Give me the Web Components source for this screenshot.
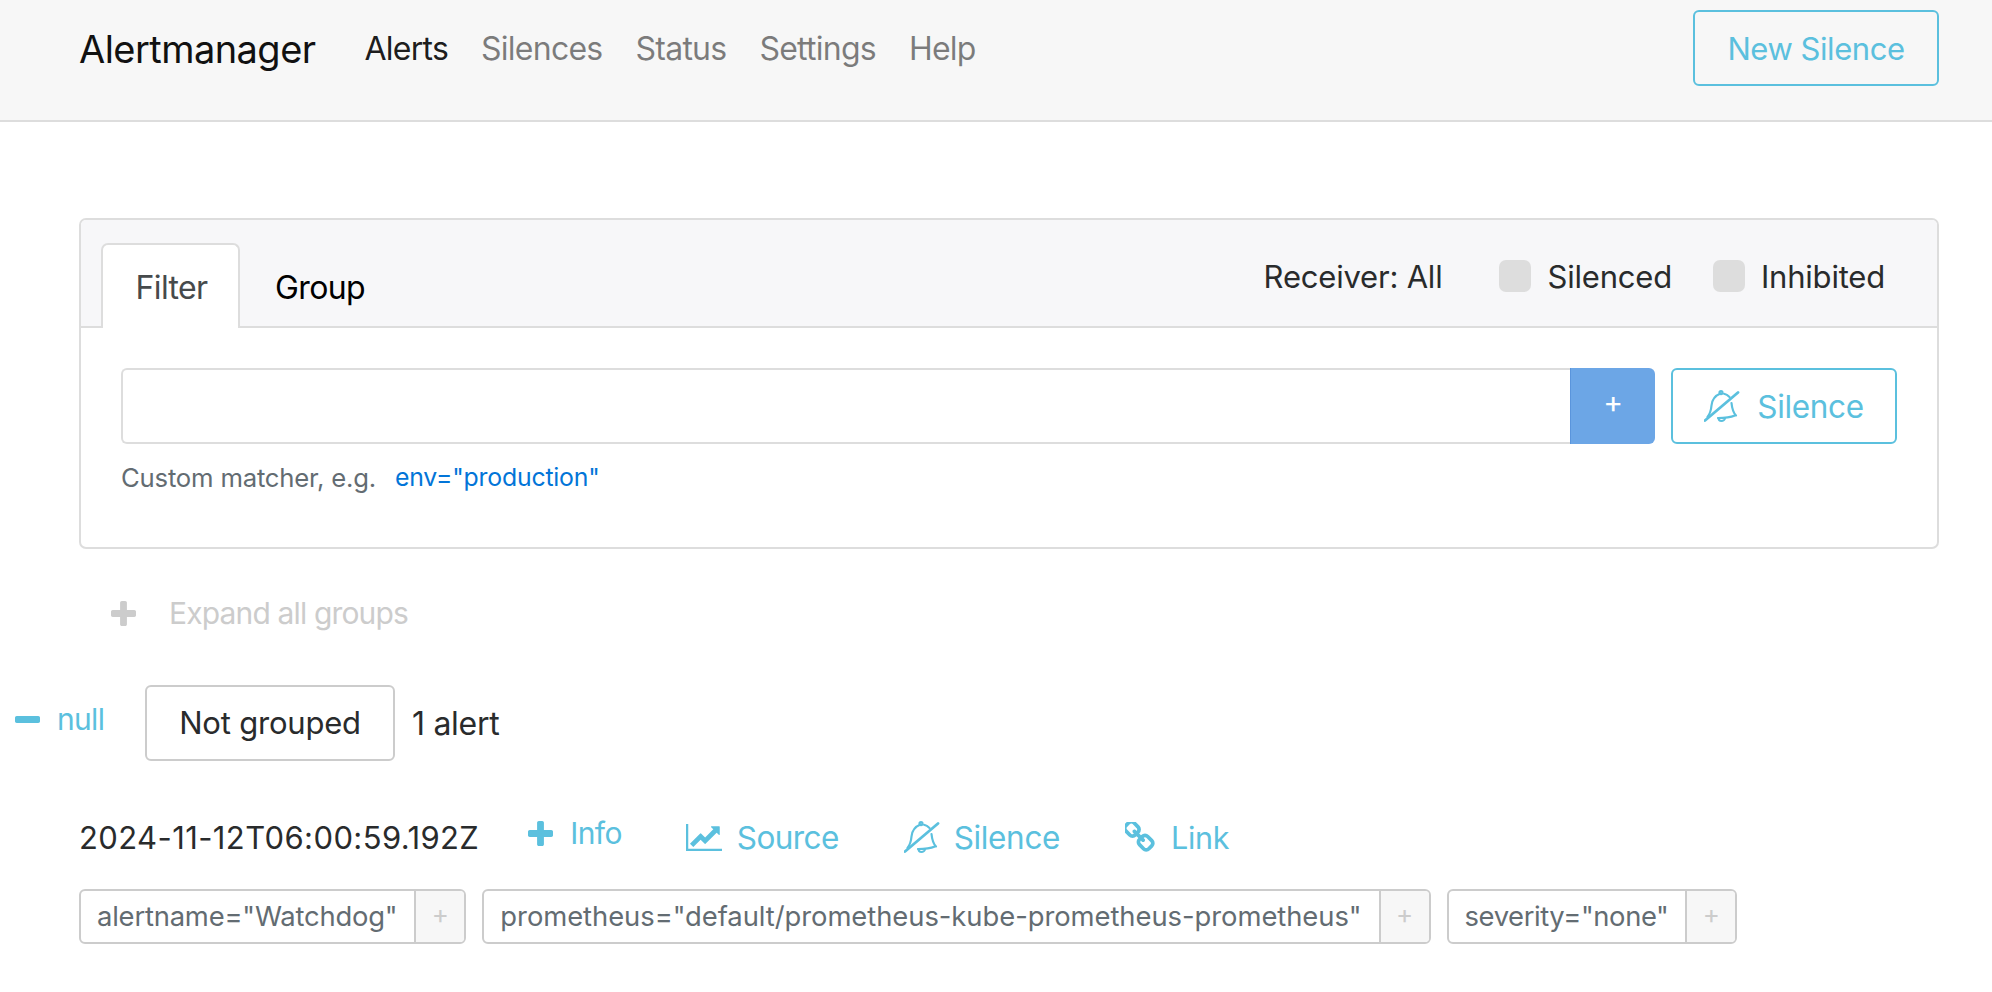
<!DOCTYPE html>
<html>
<head>
<meta charset="utf-8">
<title>Alertmanager</title>
<style>
  html, body { margin: 0; padding: 0; background: #fff; }
  body { font-family: Inter, "Liberation Sans", sans-serif; font-size: 31px; color: #292b2c; }
</style>
</head>
<body>
<am-navbar active="Alerts"></am-navbar>
<am-page>
  <am-filter-card></am-filter-card>
  <am-expand>Expand all groups</am-expand>
  <am-group-row count="1 alert"></am-group-row>
  <am-alert time="2024-11-12T06:00:59.192Z">
    <am-matcher>alertname="Watchdog"</am-matcher>
    <am-matcher style="letter-spacing: -.05px">prometheus="default/prometheus-kube-prometheus-prometheus"</am-matcher>
    <am-matcher style="letter-spacing: -.4px">severity="none"</am-matcher>
  </am-alert>
</am-page>

<script>
  const ICONS = {
    plus: ['192 128 1408 1408', '<path fill="currentColor" d="M1600 736v192q0 40-28 68t-68 28h-416v416q0 40-28 68t-68 28h-192q-40 0-68-28t-28-68v-416h-416q-40 0-68-28t-28-68v-192q0-40 28-68t68-28h416v-416q0-40 28-68t68-28h192q40 0 68 28t28 68v416h416q40 0 68 28t28 68z"/>'],
    minus: ['192 128 1408 1408', '<path fill="currentColor" d="M1600 736v192q0 40-28 68t-68 28h-1216q-40 0-68-28t-28-68v-192q0-40 28-68t68-28h1216q40 0 68 28t28 68z"/>'],
    chart: ['0 128 2048 1536', '<path fill="currentColor" d="M2048 1536v128h-2048v-1536h128v1408h1920zm-128-1248v435q0 21-19.500 29.500t-35.500-7.500l-121-121-633 633q-10 10-23 10t-23-10l-233-233-416 416-192-192 585-585q10-10 23-10t23 10l233 233 464-464-121-121q-16-16-7.500-35.500t29.500-19.500h435q14 0 23 9t9 23z"/>'],
    link: ['128 128 1536 1536', '<path fill="currentColor" d="M1456 1216q0-40-28-68l-208-208q-28-28-68-28-42 0-72 32 3 3 19 18.500t21.500 21.500 15 19 13 25.500 3.500 27.500q0 40-28 68t-68 28q-15 0-27.500-3.500t-25.500-13-19-15-21.500-21.500-18.500-19q-33 31-33 73 0 40 28 68l206 207q27 27 68 27 40 0 68-26l147-146q28-28 28-67zm-703-705q0-40-28-68l-206-207q-28-28-68-28-39 0-68 27l-147 146q-28 28-28 67 0 40 28 68l208 208q27 27 68 27 42 0 72-31-3-3-19-18.500t-21.500-21.500-15-19-13-25.500-3.500-27.500q0-40 28-68t68-28q15 0 27.500 3.500t25.500 13 19 15 21.500 21.500 18.500 19q33-31 33-73zm895 705q0 120-85 203l-147 146q-83 83-203 83-121 0-204-85l-206-207q-83-83-83-203 0-123 88-209l-88-88q-86 88-208 88-120 0-204-84l-208-208q-84-84-84-204t85-203l147-146q83-83 203-83 121 0 204 85l206 207q83 83 83 203 0 123-88 209l88 88q86-88 208-88 120 0 204 84l208 208q84 84 84 204z"/>'],
    bell: ['0 0 36 32', '<g fill="none" stroke="currentColor" stroke-width="2.200" stroke-linecap="round" stroke-linejoin="round"><path d="M1 30.500 34 2.500" stroke-width="2.800"/><path d="M16.500 3.500C10 6 8 10 7.500 15.500 7 21 5.500 24.500 3.500 27M20 3.800c2 .5 4 1.700 5.500 3.200M27.500 13c.5 5 2 10 4.500 12.500H31C26 27.500 20 28 14 28"/><circle cx="17" cy="2.600" r="1.500"/><path d="M14.500 28c0 2 1.500 3 3 3s3.500-1 3.500-3" stroke-width="2"/></g>']
  };

  customElements.define('am-icon', class extends HTMLElement {
    connectedCallback() {
      const [box, body] = ICONS[this.getAttribute('name')];
      const root = this.attachShadow({mode: 'open'});
      root.innerHTML = `<style>
        :host { display: inline-flex; flex: none; }
        svg { display: block; width: var(--w, 25px); height: var(--h, 25px); }
      </style><svg viewBox="${box}" preserveAspectRatio="none">${body}</svg>`;
    }
  });

  customElements.define('am-navbar', class extends HTMLElement {
    constructor() {
      super();
      const active = this.getAttribute('active');
      const links = ['Alerts', 'Silences', 'Status', 'Settings', 'Help'].map(name =>
        `<a class="${name === active ? 'on' : ''}">${name}</a>`).join('');
      this.attachShadow({mode: 'open'}).innerHTML = `<style>
        :host { display: flex; align-items: flex-start; box-sizing: border-box; height: 122px;
          padding: 10px 53px 0 79px; background: #f7f7f7; border-bottom: 2px solid #ddd; }
        .brand { font-size: 38px; line-height: 78px; color: #111; letter-spacing: -.55px; margin-right: 49px; }
        nav { display: flex; gap: 33px; flex: 1; line-height: 78px; font-size: 32px; letter-spacing: -.75px; }
        a { color: rgba(0,0,0,.5); }
        a.on { color: rgba(0,0,0,.9); }
        .new { box-sizing: border-box; width: 246px; height: 76px; border: 2px solid #5bc0de; border-radius: 6px;
          color: #5bc0de; font-size: 31px; letter-spacing: -.45px; line-height: 74px; text-align: center; }
      </style>
      <span class="brand">Alertmanager</span><nav>${links}</nav><span class="new">New Silence</span>`;
    }
  });

  customElements.define('am-page', class extends HTMLElement {
    constructor() {
      super();
      this.attachShadow({mode: 'open'}).innerHTML = `<style>
        :host { display: block; padding: 96px 53px 0 79px; }
      </style><slot></slot>`;
    }
  });

  customElements.define('am-filter-card', class extends HTMLElement {
    constructor() {
      super();
      this.attachShadow({mode: 'open'}).innerHTML = `<style>
        :host { display: block; box-sizing: border-box; height: 331px; border: 2px solid #ddd; border-radius: 7px; font-size: 31px; letter-spacing: -.2px; }
        .head { box-sizing: border-box; height: 108px; display: flex; padding: 23px 52px 0 20px; background: #f7f7f9;
          border-bottom: 2px solid #ddd; border-radius: 5px 5px 0 0; }
        .tab { box-sizing: border-box; height: 85px; line-height: 89px; padding: 0 32px; font-size: 32px; letter-spacing: -.6px; }
        .tab.on { width: 139px; background: #fff; border: 2px solid #ddd; border-bottom: 0; border-radius: 7px 7px 0 0; color: #464a4c; padding: 0 0 0 2px; text-align: center; line-height: 85px; }
        .tab.off { color: #000; padding-left: 35px; }
        .opts { margin-left: auto; display: flex; align-items: center; height: 66px; }
        .recv { margin-right: 57px; }
        .chk { width: 32px; height: 32px; border-radius: 7px; background: #ddd; margin-right: 16px; }
        .lbl { margin-right: 41px; }
        .lbl:last-child { margin-right: 0; }
        .body { padding: 40px 40px 0; }
        .row { display: flex; height: 76px; }
        .input { flex: 1; border: 2px solid #ddd; border-right: 0; border-radius: 6px 0 0 6px; }
        .add { width: 85px; background: #6ca6e6; border-left: 1px solid #5a95dc; box-sizing: border-box; border-radius: 0 6px 6px 0;
          color: #fff; font-size: 30px; line-height: 68px; text-align: center; }
        .sil { box-sizing: border-box; width: 226px; margin-left: 16px; border: 2px solid #5bc0de; border-radius: 6px; color: #5bc0de;
          display: flex; align-items: center; justify-content: center; gap: 17px; --w: 36px; --h: 32px; font-size: 31.5px; letter-spacing: -.35px; }
        .help { margin-top: 18px; font-size: 25.7px; letter-spacing: -.2px; line-height: 32px; color: #636c72; display: flex; gap: 19px; }
        .help a { color: #0275d8; font-size: 24.8px; margin-top: -1px; }
      </style>
      <div class="head">
        <span class="tab on">Filter</span><span class="tab off">Group</span>
        <div class="opts">
          <span class="recv">Receiver: All</span>
          <span class="chk"></span><span class="lbl">Silenced</span>
          <span class="chk"></span><span class="lbl">Inhibited</span>
        </div>
      </div>
      <div class="body">
        <div class="row">
          <div class="input"></div><div class="add">+</div>
          <div class="sil"><am-icon name="bell"></am-icon><span>Silence</span></div>
        </div>
        <div class="help"><span>Custom matcher, e.g.</span><a>env="production"</a></div>
      </div>`;
    }
  });

  customElements.define('am-expand', class extends HTMLElement {
    constructor() {
      super();
      this.attachShadow({mode: 'open'}).innerHTML = `<style>
        :host { display: flex; align-items: center; height: 50px; margin-top: 39px; padding-left: 32px; gap: 33px; color: #ccc; font-size: 30px; letter-spacing: -.85px; }
      </style><am-icon name="plus"></am-icon><span><slot></slot></span>`;
    }
  });

  customElements.define('am-group-row', class extends HTMLElement {
    constructor() {
      super();
      this.attachShadow({mode: 'open'}).innerHTML = `<style>
        :host { display: flex; align-items: center; height: 76px; margin-top: 47px; margin-left: -64px; letter-spacing: -.2px; }
        .tog { display: flex; align-items: center; gap: 17px; color: #5bc0de; width: 130px; font-size: 30px; letter-spacing: -.7px; margin-top: -8px; }
        .box { box-sizing: border-box; width: 250px; height: 76px; line-height: 72px; text-align: center; border: 2px solid #ccc; border-radius: 6px; }
        .count { margin-left: 17px; font-size: 32px; letter-spacing: -.3px; }
      </style>
      <span class="tog"><am-icon name="minus"></am-icon><span>null</span></span>
      <span class="box">Not grouped</span>
      <span class="count">${this.getAttribute('count')}</span>`;
    }
  });

  customElements.define('am-action', class extends HTMLElement {
    constructor() {
      super();
      const name = this.getAttribute('icon');
      this.attachShadow({mode: 'open'}).innerHTML = `<style>
        :host { display: inline-flex; align-items: center; gap: var(--gap, 16px); color: #5bc0de; }
      </style><am-icon name="${name}"></am-icon><span><slot></slot></span>`;
    }
  });

  customElements.define('am-alert', class extends HTMLElement {
    constructor() {
      super();
      this.attachShadow({mode: 'open'}).innerHTML = `<style>
        :host { display: block; margin-top: 54px; }
        .head { display: flex; align-items: center; height: 44px; font-size: 31.5px; letter-spacing: -.35px; }
        .time { margin-right: 49px; font-size: 31px; letter-spacing: .4px; }
        .info { margin-top: -8px; margin-right: 64px; font-size: 30px; letter-spacing: -.6px; --gap: 17px; }
        .src { margin-right: 65px; letter-spacing: -.6px; --gap: 15px; --w: 36px; --h: 27px; }
        .sil { margin-right: 65px; --w: 36px; --h: 32px; --gap: 14px; }
        .lnk { --w: 30px; --h: 30px; --gap: 16px; font-size: 30.5px; }
        .labels { display: flex; gap: 16px; margin-top: 30px; }
      </style>
      <div class="head">
        <span class="time">${this.getAttribute('time')}</span>
        <am-action class="info" icon="plus">Info</am-action>
        <am-action class="src" icon="chart">Source</am-action>
        <am-action class="sil" icon="bell">Silence</am-action>
        <am-action class="lnk" icon="link">Link</am-action>
      </div>
      <div class="labels"><slot></slot></div>`;
    }
  });

  customElements.define('am-matcher', class extends HTMLElement {
    constructor() {
      super();
      this.attachShadow({mode: 'open'}).innerHTML = `<style>
        :host { display: flex; box-sizing: border-box; height: 55px; border: 2px solid #ccc; border-radius: 6px; color: #636c72; font-size: 27.4px; letter-spacing: -.2px; line-height: 51px; }
        .txt { padding: 0 17px 0 16px; border-right: 2px solid #ccc; }
        .add { width: 48px; background: #f7f7f7; border-radius: 0 4px 4px 0; color: #ccc; text-align: center; font-size: 26px; line-height: 46px; letter-spacing: 0; }
      </style><span class="txt"><slot></slot></span><span class="add">+</span>`;
    }
  });
</script>
</body>
</html>
